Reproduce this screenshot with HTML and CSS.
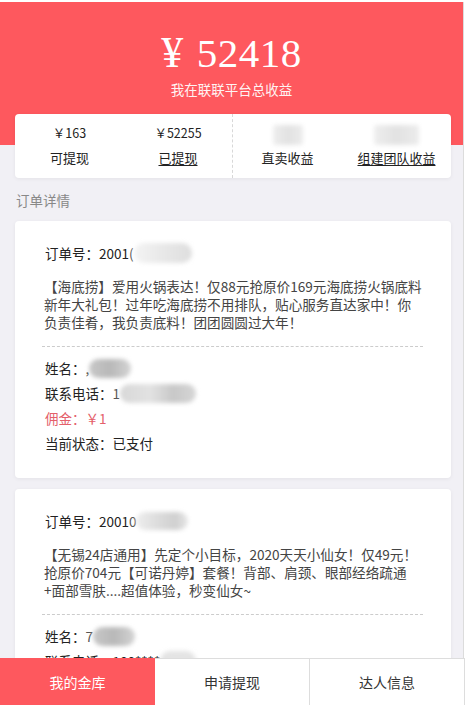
FILE: index.html
```html
<!DOCTYPE html>
<html lang="zh-CN">
<head>
<meta charset="utf-8">
<title>我的金库</title>
<link rel="stylesheet" href="styles.css">
</head>
<body>
<div class="page">
  <header class="hero">
    <div class="hero-amount"><span class="yen">¥</span>52418</div>
    <div class="hero-sub">我在联联平台总收益</div>
  </header>

  <section class="stats">
    <div class="stat">
      <div class="stat-val">￥163</div>
      <div class="stat-label">可提现</div>
    </div>
    <div class="stat stat-split">
      <div class="stat-val">￥52255</div>
      <div class="stat-label link">已提现</div>
    </div>
    <div class="stat">
      <div class="stat-val"><span class="blur blur-light blur-s"></span></div>
      <div class="stat-label">直卖收益</div>
    </div>
    <div class="stat">
      <div class="stat-val"><span class="blur blur-light blur-m"></span></div>
      <div class="stat-label link">组建团队收益</div>
    </div>
  </section>

  <h2 class="section-title">订单详情</h2>

  <article class="order">
    <div class="order-no">订单号：2001<span class="partial">(</span><span class="blur blur-order"></span></div>
    <p class="order-desc">【海底捞】爱用火锅表达！仅88元抢原价169元海底捞火锅底料新年大礼包！过年吃海底捞不用排队，贴心服务直达家中！你负责佳肴，我负责底料！团团圆圆过大年！</p>
    <div class="order-info">
      <div class="row">姓名：<span class="partial">,</span><span class="blur blur-name"></span></div>
      <div class="row">联系电话：<span class="partial">1</span><span class="blur blur-phone"></span></div>
      <div class="row commission">佣金：￥1</div>
      <div class="row">当前状态：已支付</div>
    </div>
  </article>

  <article class="order">
    <div class="order-no">订单号：2001<span class="partial">0</span><span class="blur blur-order2"></span></div>
    <p class="order-desc">【无锡24店通用】先定个小目标，2020天天小仙女！仅49元！抢原价704元【可诺丹婷】套餐！背部、肩颈、眼部经络疏通+面部雪肤....超值体验，秒变仙女~</p>
    <div class="order-info">
      <div class="row">姓名：<span class="partial">7</span><span class="blur blur-name"></span></div>
      <div class="row">联系电话：188****<span class="blur blur-phone2"></span></div>
      <div class="row commission">佣金：￥1</div>
      <div class="row">当前状态：已支付</div>
    </div>
  </article>

  <nav class="tabbar">
    <a class="tab active">我的金库</a>
    <a class="tab">申请提现</a>
    <a class="tab">达人信息</a>
  </nav>
</div>
</body>
</html>
```

FILE: styles.css
```css
* { box-sizing: border-box; }

html, body {
  margin: 0;
  padding: 0;
  background: #ffffff;
}

body {
  font-family: "Noto Sans CJK SC", "Noto Sans", sans-serif;
  color: #333333;
  font-size: 13.5px;
}

.page {
  width: 464px;
  margin-top: 2px;
  background: #f1f0f5;
  border-right: 1px solid #dcdcdc;
  min-height: 703px;
  padding-bottom: 60px;
}

.hero {
  height: 143px;
  background: #fe585e;
  color: #ffffff;
  text-align: center;
  padding-top: 28px;
}

.hero-amount {
  font-family: "Liberation Serif", "DejaVu Serif", serif;
  font-size: 41px;
  line-height: 46px;
  letter-spacing: 0.5px;
}

.yen {
  font-size: 44px;
  margin-right: 13px;
}

.hero-sub {
  margin-top: 3px;
  font-size: 13.5px;
  line-height: 20px;
  color: #fff3f3;
}

.stats {
  margin: -31px 0 0 15px;
  width: 436px;
  height: 64px;
  background: #ffffff;
  border-radius: 4px;
  box-shadow: 0 1px 4px rgba(0, 0, 0, 0.06);
  display: grid;
  grid-template-columns: repeat(4, 1fr);
  position: relative;
}

.stat {
  text-align: center;
  padding-top: 9px;
}

.stat-split {
  border-right: 1px dashed #d8d8d8;
}

.stat-val {
  height: 20px;
  line-height: 20px;
  font-size: 12.5px;
  color: #222222;
}

.stat-label {
  margin-top: 5px;
  line-height: 20px;
  font-size: 13px;
  color: #222222;
}

.link {
  text-decoration: underline;
  text-underline-offset: 2px;
}

.section-title {
  margin: 12px 0 11px 16px;
  font-size: 13.5px;
  font-weight: normal;
  line-height: 20px;
  color: #888888;
}

.order {
  margin: 0 0 11px 15px;
  width: 436px;
  background: #ffffff;
  border-radius: 4px;
  box-shadow: 0 1px 4px rgba(0, 0, 0, 0.06);
  padding: 22px 28px 22px 27px;
}

.order-no {
  padding-left: 3px;
  line-height: 20px;
  font-size: 13.5px;
  color: #222222;
  display: flex;
  align-items: center;
}

.partial {
  color: #555555;
}

.order-desc {
  margin: 14px 0 0 0;
  padding-left: 2px;
  font-size: 13.6px;
  line-height: 18px;
  color: #444444;
}

.order-info {
  margin-top: 15px;
  padding-top: 9px;
  border-top: 1px dashed #cccccc;
}

.row {
  padding-left: 3px;
  line-height: 25px;
  font-size: 13.5px;
  color: #222222;
  display: flex;
  align-items: center;
}

.commission {
  color: #e4606a;
}

.blur {
  display: inline-block;
  height: 20px;
  border-radius: 10px;
  background: #cccccc;
  filter: blur(2px);
}

.blur-light {
  vertical-align: middle;
  background: linear-gradient(90deg, #eeeeee, #e2e2e2 50%, #ececec);
  border-radius: 3px;
}

.blur-s { width: 30px; }
.blur-m { width: 45px; }

.blur-order {
  width: 58px;
  background: linear-gradient(90deg, #f4f4f4, #e8e8e8 50%, #dedede);
}

.blur-order2 {
  width: 52px;
  height: 18px;
  background: linear-gradient(90deg, #eeeeee, #dddddd 40%, #d0d0d0 75%, #e6e6e6);
}

.blur-name {
  width: 42px;
  height: 19px;
  background: linear-gradient(90deg, #c8c8c8, #b8b8b8 50%, #d4d4d4);
}

.blur-phone {
  width: 76px;
  height: 19px;
  background: linear-gradient(90deg, #d8d8d8, #e2e2e2 40%, #c8c8c8 70%, #d6d6d6);
}

.blur-phone2 {
  width: 36px;
  height: 22px;
  background: #e4e4e4;
}

.tabbar {
  position: fixed;
  left: 0;
  bottom: 0;
  width: 465px;
  height: 47px;
  background: #ffffff;
  border-top: 1px solid #dddddd;
  display: grid;
  grid-template-columns: 155px 155px 155px;
}

.tab {
  display: flex;
  align-items: center;
  justify-content: center;
  font-size: 14px;
  color: #333333;
}

.tab + .tab {
  border-right: 1px solid #dddddd;
}

.tab.active {
  background: #fe585e;
  color: #ffffff;
  margin-top: -1px;
}
```
